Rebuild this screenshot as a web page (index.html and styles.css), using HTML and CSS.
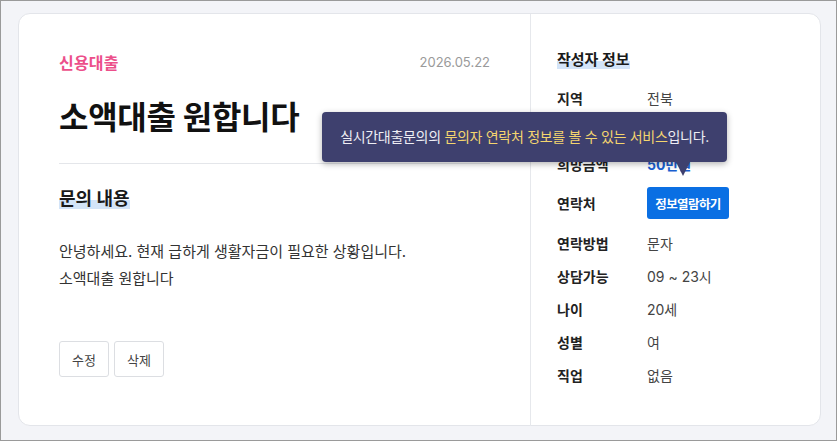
FILE: index.html
```html
<!DOCTYPE html>
<html lang="ko">
<head>
  <meta charset="UTF-8" />
  <meta name="viewport" content="width=device-width, initial-scale=1.0" />
  <title>소액대출 원합니다</title>
  <link rel="stylesheet" href="styles.css">
</head>
<body>
  <div class="card">
    <div class="post">
      <div class="post-head">
        <span class="category">신용대출</span>
        <span class="date">2026.05.22</span>
      </div>
      <h1>소액대출 원합니다</h1>
      <hr />
      <h2><span class="mark">문의 내용</span></h2>
      <p class="content">안녕하세요. 현재 급하게 생활자금이 필요한 상황입니다.<br>소액대출 원합니다</p>
      <div class="actions">
        <button class="btn">수정</button>
        <button class="btn">삭제</button>
      </div>
    </div>

    <div class="writer">
      <h3><span class="mark">작성자 정보</span></h3>
      <dl class="info">
        <div class="row"><dt>지역</dt><dd>전북</dd></div>
        <div class="row"><dt>대출종류</dt><dd>신용대출</dd></div>
        <div class="row"><dt>희망금액</dt><dd class="amount">50만원</dd></div>
        <div class="row contact">
          <dt>연락처</dt>
          <dd>
            <span class="open-wrap">
              <button class="btn-open">정보열람하기</button>
              <span class="tooltip">실시간대출문의의 <em>문의자 연락처 정보를 볼 수 있는 서비스</em>입니다.</span>
            </span>
          </dd>
        </div>
        <div class="row"><dt>연락방법</dt><dd>문자</dd></div>
        <div class="row"><dt>상담가능</dt><dd>09 ~ 23시</dd></div>
        <div class="row"><dt>나이</dt><dd>20세</dd></div>
        <div class="row"><dt>성별</dt><dd>여</dd></div>
        <div class="row"><dt>직업</dt><dd>없음</dd></div>
      </dl>
    </div>
  </div>
</body>
</html>
```

FILE: styles.css
```css
html, body { height: 100%; }
* { box-sizing: border-box; }
body { margin: 0; border: 1px solid #9a9a9a; background: #f3f4f8; font-family: Inter, "Noto Sans CJK KR", sans-serif; color: #222; padding: 12px 15px 14px 17px; }

.card { display: grid; grid-template-columns: 1fr 290px; height: 100%; background: #fff; border: 1px solid #e3e5ea; border-radius: 12px; }

.post { padding: 36px 40px; }
.post-head { display: flex; justify-content: space-between; align-items: center; height: 24px; }
.category { color: #ec4f8a; font-size: 16px; font-weight: 600; letter-spacing: 0.2px; }
.date { color: #9a9a9a; font-size: 13px; }
h1 { margin: 24px 0 0; font-size: 32px; line-height: 40px; font-weight: 700; color: #111; letter-spacing: -0.3px; }
hr { margin: 25px 0 0; border: 0; border-top: 1px solid #e4e6ea; }
h2 { margin: 22px 0 0; font-size: 18px; line-height: 26px; font-weight: 700; color: #1a1a1a; }
.mark { background: linear-gradient(transparent 58%, #d3e4f8 58%); }
.content { margin: 26px 0 0; font-size: 15px; line-height: 27px; color: #333; }
.actions { display: flex; gap: 5px; margin-top: 49px; }
.btn { width: 50px; height: 36px; border: 1px solid #dcdee2; border-radius: 3px; background: #fff; font-family: inherit; font-size: 13px; color: #444; }

.writer { border-left: 1px solid #e6e8ec; padding: 35px 26px; }
h3 { margin: 0; font-size: 15px; line-height: 22px; font-weight: 700; color: #1a1a1a; }
.info { margin: 10px 0 0; }
.row { display: flex; align-items: center; height: 33px; font-size: 14px; }
.row.contact { height: 46px; }
dt { width: 90px; font-weight: 700; color: #222; }
dd { margin: 0; color: #444; }
.amount { color: #1a5fd0; font-weight: 700; }

.open-wrap { position: relative; display: inline-block; }
.btn-open { display: block; width: 82px; height: 32px; padding: 0; border: 0; border-radius: 3px; background: #0a6fe3; color: #fff; font-family: inherit; font-size: 12.5px; font-weight: 700; letter-spacing: -0.6px; }
.tooltip { position: absolute; right: 2px; bottom: calc(100% + 25px); height: 50px; padding: 0 18px; line-height: 50px; white-space: nowrap; background: #3e406e; color: #eeeef4; font-size: 14px; letter-spacing: -0.3px; border-radius: 4px; box-shadow: 0 2px 6px rgba(0, 0, 0, 0.3); }
.tooltip em { font-style: normal; color: #f4d56e; }
.tooltip::after { content: ""; position: absolute; top: 100%; right: 37px; border: 7px solid transparent; border-top: 14px solid #3e406e; border-bottom: 0; }
```
